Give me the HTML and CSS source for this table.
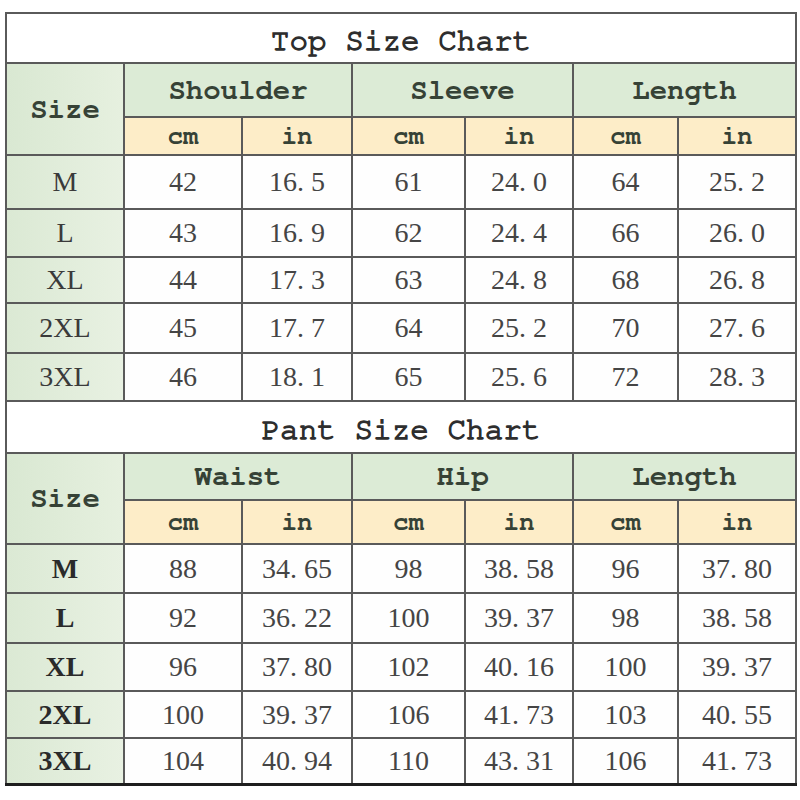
FILE: index.html
```html
<!DOCTYPE html>
<html>
<head>
<meta charset="utf-8">
<link rel="stylesheet" href="styles.css">
</head>
<body>
<div class="page">
<table class="chart">
  <colgroup>
    <col class="c-size"><col class="c1"><col class="c2"><col class="c3"><col class="c4"><col class="c5"><col class="c6">
  </colgroup>
  <tbody>
    <tr class="title-row top-title"><td colspan="7" class="title">Top Size Chart</td></tr>
    <tr class="group-row g-top">
      <td rowspan="2" class="size-head">Size</td>
      <td colspan="2" class="group">Shoulder</td>
      <td colspan="2" class="group">Sleeve</td>
      <td colspan="2" class="group">Length</td>
    </tr>
    <tr class="unit-row u-top">
      <td class="unit">cm</td><td class="unit">in</td>
      <td class="unit">cm</td><td class="unit">in</td>
      <td class="unit">cm</td><td class="unit">in</td>
    </tr>
    <tr class="data r1"><td class="sz">M</td><td>42</td><td>16. 5</td><td>61</td><td>24. 0</td><td>64</td><td>25. 2</td></tr>
    <tr class="data r2"><td class="sz">L</td><td>43</td><td>16. 9</td><td>62</td><td>24. 4</td><td>66</td><td>26. 0</td></tr>
    <tr class="data r3"><td class="sz">XL</td><td>44</td><td>17. 3</td><td>63</td><td>24. 8</td><td>68</td><td>26. 8</td></tr>
    <tr class="data r4"><td class="sz">2XL</td><td>45</td><td>17. 7</td><td>64</td><td>25. 2</td><td>70</td><td>27. 6</td></tr>
    <tr class="data r5"><td class="sz">3XL</td><td>46</td><td>18. 1</td><td>65</td><td>25. 6</td><td>72</td><td>28. 3</td></tr>

    <tr class="title-row pant-title"><td colspan="7" class="title">Pant Size Chart</td></tr>
    <tr class="group-row g-pant">
      <td rowspan="2" class="size-head">Size</td>
      <td colspan="2" class="group">Waist</td>
      <td colspan="2" class="group">Hip</td>
      <td colspan="2" class="group">Length</td>
    </tr>
    <tr class="unit-row u-pant">
      <td class="unit">cm</td><td class="unit">in</td>
      <td class="unit">cm</td><td class="unit">in</td>
      <td class="unit">cm</td><td class="unit">in</td>
    </tr>
    <tr class="data pant p1"><td class="sz bold">M</td><td>88</td><td>34. 65</td><td>98</td><td>38. 58</td><td>96</td><td>37. 80</td></tr>
    <tr class="data pant p2"><td class="sz bold">L</td><td>92</td><td>36. 22</td><td>100</td><td>39. 37</td><td>98</td><td>38. 58</td></tr>
    <tr class="data pant p3"><td class="sz bold">XL</td><td>96</td><td>37. 80</td><td>102</td><td>40. 16</td><td>100</td><td>39. 37</td></tr>
    <tr class="data pant p4"><td class="sz bold">2XL</td><td>100</td><td>39. 37</td><td>106</td><td>41. 73</td><td>103</td><td>40. 55</td></tr>
    <tr class="data pant p5 last"><td class="sz bold">3XL</td><td>104</td><td>40. 94</td><td>110</td><td>43. 31</td><td>106</td><td>41. 73</td></tr>
  </tbody>
</table>
</div>
</body>
</html>
```

FILE: styles.css
```css
html, body {
  margin: 0;
  padding: 0;
  background: #ffffff;
}

.page {
  padding: 12px 0 0 5px;
}

.chart {
  border-collapse: collapse;
  table-layout: fixed;
  width: 790px;
  font-family: "Liberation Serif", "DejaVu Serif", serif;
  color: #454545;
}

.c-size { width: 118px; }
.c1 { width: 118px; }
.c2 { width: 110px; }
.c3 { width: 113px; }
.c4 { width: 108px; }
.c5 { width: 105px; }
.c6 { width: 118px; }

.chart td {
  border: 2px solid #5a5a5a;
  padding: 0;
  text-align: center;
  vertical-align: middle;
  font-size: 28px;
  line-height: 1;
  background: #fefefe;
}

.title {
  font-family: "FreeMono", "Nimbus Mono PS", "Courier New", "Liberation Mono", monospace;
  font-size: 31px !important;
  color: #2e2e2e;
  background: #ffffff !important;
  -webkit-text-stroke: 1.3px #2e2e2e;
}

.top-title { height: 50px; }
.pant-title { height: 52px; }
.top-title .title { padding-top: 4px; }
.pant-title .title { padding-top: 5px; }

.group-row.g-top { height: 54px; }
.group-row.g-pant { height: 47px; }
.unit-row.u-top { height: 38px; }
.unit-row.u-pant { height: 44px; }

.group,
.size-head,
.unit {
  font-family: "FreeMono", "Nimbus Mono PS", "Courier New", "Liberation Mono", monospace;
  font-weight: bold;
  color: #364236;
}

.group {
  font-size: 29px !important;
  background: #dcebd6 !important;
}

.size-head {
  font-size: 29px !important;
  background: linear-gradient(90deg, #d9e8d2, #e6f0df) !important;
}

.unit {
  font-size: 26px !important;
  background: #fdedc8 !important;
}

.r1 { height: 54px; }
.r2 { height: 48px; }
.r3 { height: 46px; }
.r4 { height: 50px; }
.r5 { height: 48px; }

.p1 { height: 49px; }
.p2 { height: 50px; }
.p3 { height: 48px; }
.p4 { height: 47px; }
.p5 { height: 46px; }

.sz {
  background: linear-gradient(90deg, #dbe9d4, #e8f1e2) !important;
  color: #3a3a3a;
}

.sz.bold {
  font-weight: bold;
  color: #2a2a2a;
}

.last td {
  border-bottom: 3px solid #1e1e1e;
}
```
